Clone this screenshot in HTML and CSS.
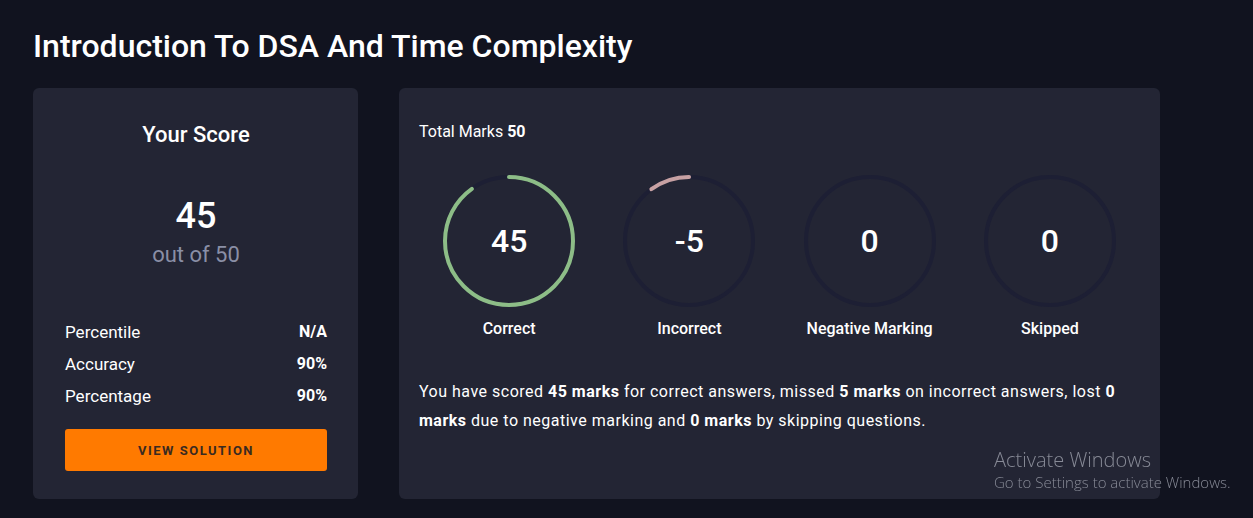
FILE: index.html
```html
<!DOCTYPE html>
<html lang="en">
<head>
<meta charset="utf-8">
<title>Introduction To DSA And Time Complexity</title>
<link rel="stylesheet" href="styles.css">
</head>
<body>
<main class="page">
  <h1 class="title">Introduction To DSA And Time Complexity</h1>
  <div class="cards">
    <section class="card score-card">
      <h2 class="score-heading">Your Score</h2>
      <div class="score-value">45</div>
      <div class="score-out">out of 50</div>
      <ul class="stats">
        <li><span>Percentile</span><strong>N/A</strong></li>
        <li><span>Accuracy</span><strong>90%</strong></li>
        <li><span>Percentage</span><strong>90%</strong></li>
      </ul>
      <button class="btn-solution" type="button">VIEW SOLUTION</button>
    </section>
    <section class="card marks-card">
      <div class="total">Total Marks <strong>50</strong></div>
      <div class="rings">
        <div class="ring-item">
          <div class="ring">
            <svg width="136" height="136" viewBox="0 0 136 136">
              <circle class="track" cx="68" cy="68" r="64"/>
              <circle class="arc arc-green" cx="68" cy="68" r="64" stroke-dasharray="361.9 402.1" transform="rotate(-90 68 68)"/>
            </svg>
            <span class="ring-num">45</span>
          </div>
          <div class="ring-label">Correct</div>
        </div>
        <div class="ring-item">
          <div class="ring">
            <svg width="136" height="136" viewBox="0 0 136 136">
              <circle class="track" cx="68" cy="68" r="64"/>
              <circle class="arc arc-pink" cx="68" cy="68" r="64" stroke-dasharray="40.2 402.1" transform="rotate(-126 68 68)"/>
            </svg>
            <span class="ring-num">-5</span>
          </div>
          <div class="ring-label">Incorrect</div>
        </div>
        <div class="ring-item">
          <div class="ring">
            <svg width="136" height="136" viewBox="0 0 136 136">
              <circle class="track" cx="68" cy="68" r="64"/>
            </svg>
            <span class="ring-num">0</span>
          </div>
          <div class="ring-label">Negative Marking</div>
        </div>
        <div class="ring-item">
          <div class="ring">
            <svg width="136" height="136" viewBox="0 0 136 136">
              <circle class="track" cx="68" cy="68" r="64"/>
            </svg>
            <span class="ring-num">0</span>
          </div>
          <div class="ring-label">Skipped</div>
        </div>
      </div>
      <p class="summary">You have scored <strong>45 marks</strong> for correct answers, missed <strong>5 marks</strong> on incorrect answers, lost <strong>0 marks</strong> due to negative marking and <strong>0 marks</strong> by skipping questions.</p>
    </section>
  </div>
</main>
<div class="watermark">
  <div class="wm-title">Activate Windows</div>
  <div class="wm-sub">Go to Settings to activate Windows.</div>
</div>
</body>
</html>
```

FILE: styles.css
```css
* { box-sizing: border-box; }

html, body {
  margin: 0;
  padding: 0;
  background: #11131f;
  color: #ffffff;
  font-family: Roboto, "Liberation Sans", sans-serif;
}

.page {
  padding: 28px 33px 0 33px;
}

.title {
  margin: 0 0 24px 0;
  font-size: 32px;
  line-height: 36px;
  font-weight: 500;
  color: #ffffff;
}

.cards {
  display: flex;
  gap: 41px;
  align-items: flex-start;
}

.card {
  background: #232534;
  border-radius: 6px;
  height: 411px;
}

.score-card {
  width: 325px;
  padding: 34px 31px 28px 32px;
  display: flex;
  flex-direction: column;
  align-items: center;
}

.score-heading {
  margin: 0;
  font-size: 22px;
  line-height: 25px;
  font-weight: 500;
}

.score-value {
  margin-top: 49px;
  font-size: 36px;
  line-height: 40px;
  font-weight: 500;
}

.score-out {
  margin-top: 7px;
  font-size: 22px;
  line-height: 24px;
  color: #8a8fa6;
}

.stats {
  list-style: none;
  margin: 49px 0 0 0;
  padding: 0;
  width: 100%;
}

.stats li {
  display: flex;
  justify-content: space-between;
  font-size: 17px;
  line-height: 32px;
}

.stats strong {
  font-weight: 700;
  font-size: 16px;
}

.btn-solution {
  margin-top: 17px;
  width: 100%;
  height: 42px;
  border: none;
  border-radius: 3px;
  background: #ff7a00;
  color: #3a2a20;
  font-family: Roboto, "Liberation Sans", sans-serif;
  font-size: 13px;
  font-weight: 700;
  letter-spacing: 1.5px;
}

.marks-card {
  width: 761px;
  padding: 34px 20px 0 20px;
}

.total {
  font-size: 16px;
  line-height: 20px;
}

.total strong { font-weight: 700; }

.rings {
  margin-top: 31px;
  display: grid;
  grid-template-columns: repeat(4, 1fr);
}

.ring-item {
  display: flex;
  flex-direction: column;
  align-items: center;
}

.ring {
  display: grid;
  place-items: center;
  width: 136px;
  height: 136px;
}

.ring svg,
.ring .ring-num {
  grid-area: 1 / 1;
}

.ring svg { display: block; }

.track {
  fill: none;
  stroke: #1d1f34;
  stroke-width: 4;
}

.arc {
  fill: none;
  stroke-width: 4;
  stroke-linecap: round;
}

.arc-green { stroke: #8dbd87; }
.arc-pink { stroke: #c7a1a3; }

.ring-num {
  font-size: 32px;
  font-weight: 500;
  line-height: 36px;
}

.ring-label {
  margin-top: 10px;
  font-size: 16px;
  line-height: 20px;
  font-weight: 500;
}

.summary {
  margin: 38px 0 0 0;
  font-size: 16px;
  line-height: 29px;
  letter-spacing: 0.5px;
}

.summary strong { font-weight: 700; }

.watermark {
  position: fixed;
  left: 994px;
  top: 448px;
  color: #878a96;
  font-family: "Open Sans", "Noto Sans", sans-serif;
  font-weight: 300;
  pointer-events: none;
}

.wm-title {
  font-size: 20px;
  line-height: 24px;
}

.wm-sub {
  font-size: 15px;
  line-height: 20px;
}
```
